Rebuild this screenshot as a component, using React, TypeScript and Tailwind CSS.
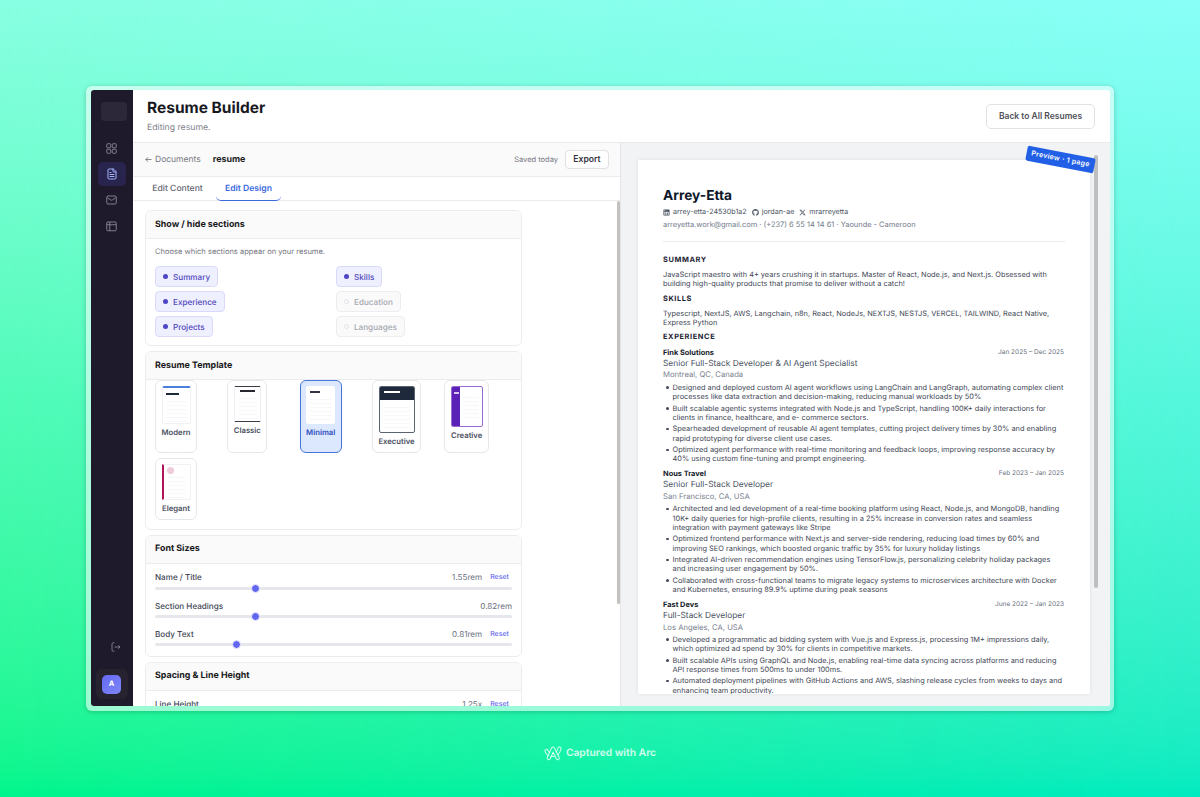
import React from 'react';
import { FileText } from 'lucide-react';
import { FaLinkedin, FaGithub } from 'react-icons/fa';
import { FaXTwitter } from 'react-icons/fa6';

const jobs = [
  {
    company: 'Fink Solutions',
    date: 'Jan 2025 – Dec 2025',
    role: 'Senior Full-Stack Developer & AI Agent Specialist',
    place: 'Montreal, QC, Canada',
    points: [
      'Designed and deployed custom AI agent workflows using LangChain and LangGraph, automating complex client\nprocesses like data extraction and decision-making, reducing manual workloads by 50%',
      'Built scalable agentic systems integrated with Node.js and TypeScript, handling 100K+ daily interactions for\nclients in finance, healthcare, and e- commerce sectors.',
      'Spearheaded development of reusable AI agent templates, cutting project delivery times by 30% and enabling\nrapid prototyping for diverse client use cases.',
      'Optimized agent performance with real-time monitoring and feedback loops, improving response accuracy by\n40% using custom fine-tuning and prompt engineering.',
    ],
  },
  {
    company: 'Nous Travel',
    date: 'Feb 2023 – Jan 2025',
    role: 'Senior Full-Stack Developer',
    place: 'San Francisco, CA, USA',
    points: [
      'Architected and led development of a real-time booking platform using React, Node.js, and MongoDB, handling\n10K+ daily queries for high-profile clients, resulting in a 25% increase in conversion rates and seamless\nintegration with payment gateways like Stripe',
      'Optimized frontend performance with Next.js and server-side rendering, reducing load times by 60% and\nimproving SEO rankings, which boosted organic traffic by 35% for luxury holiday listings',
      'Integrated AI-driven recommendation engines using TensorFlow.js, personalizing celebrity holiday packages\nand increasing user engagement by 50%.',
      'Collaborated with cross-functional teams to migrate legacy systems to microservices architecture with Docker\nand Kubernetes, ensuring 89.9% uptime during peak seasons',
    ],
  },
  {
    company: 'Fast Devs',
    date: 'June 2022 – Jan 2023',
    role: 'Full-Stack Developer',
    place: 'Los Angeles, CA, USA',
    points: [
      'Developed a programmatic ad bidding system with Vue.js and Express.js, processing 1M+ impressions daily,\nwhich optimized ad spend by 30% for clients in competitive markets.',
      'Built scalable APIs using GraphQL and Node.js, enabling real-time data syncing across platforms and reducing\nAPI response times from 500ms to under 100ms.',
      'Automated deployment pipelines with GitHub Actions and AWS, slashing release cycles from weeks to days and\nenhancing team productivity.',
    ],
  },
];

const sections = [
  { name: 'Summary', on: true },
  { name: 'Skills', on: true },
  { name: 'Experience', on: true },
  { name: 'Education', on: false },
  { name: 'Projects', on: true },
  { name: 'Languages', on: false },
];

function Sidebar() {
  return (
    <aside className="flex w-[42px] shrink-0 flex-col items-center bg-[#1e1a2b] text-[#8b8898]">
      <div className="mt-[12px] ml-[4px] h-[19px] w-[26px] rounded-[4px] bg-[#2c2839]" />
      <nav className="mt-[16px] mr-[1px] flex flex-col items-center">
        <div className="flex h-[23px] items-center">
          <svg className="h-[11px] w-[11px]" viewBox="0 0 22 22" fill="none" stroke="currentColor" strokeWidth="1.8">
            <rect x="1.500" y="1.500" width="8" height="8" rx="1.500" />
            <rect x="12.500" y="1.500" width="8" height="8" rx="1.500" />
            <rect x="1.500" y="12.500" width="8" height="8" rx="1.500" />
            <rect x="12.500" y="12.500" width="8" height="8" rx="1.500" />
          </svg>
        </div>
        <div className="mt-[2px] flex h-[24px] w-[28px] items-center justify-center rounded-[5px] bg-[#28244e] text-[#a5b4fc]">
          <FileText className="h-[12px] w-[12px]" strokeWidth={2} />
        </div>
        <div className="mt-[2px] flex h-[24px] items-center">
          <svg className="h-[10px] w-[11px]" viewBox="0 0 22 20" fill="none" stroke="currentColor" strokeWidth="1.8">
            <rect x="1.500" y="2" width="19" height="16" rx="2.500" />
            <path d="M2.500 5.500 9.500 10c1 .6 2 .6 3 0l7-4.500" />
          </svg>
        </div>
        <div className="mt-[2px] flex h-[24px] items-center">
          <svg className="h-[11px] w-[11px]" viewBox="0 0 22 22" fill="none" stroke="currentColor" strokeWidth="1.8">
            <rect x="1.500" y="2" width="19" height="17.500" rx="2" />
            <path d="M1.500 7.500h19M7.500 2v17.500" />
          </svg>
        </div>
      </nav>
      <svg className="mt-auto mb-[17px] ml-[8px] h-[10px] w-[10px]" viewBox="0 0 20 20" fill="none" stroke="currentColor" strokeWidth="1.7">
        <path d="M7 1.500H4.500a2.500 2.500 0 0 0-2.500 2.500v12a2.500 2.500 0 0 0 2.500 2.500H7M7 10h11M14.500 6.500 18 10l-3.500 3.500" />
      </svg>
      <div className="mb-[7px] flex h-[30px] w-[32px] items-center justify-center rounded-[6px] bg-[#26222f]">
        <div className="mr-[1px] flex h-[19px] w-[19px] items-center justify-center rounded-[5px] bg-linear-to-br from-[#6468f1] to-[#7f86f8] text-[7.500px] font-bold text-white">
          A
        </div>
      </div>
    </aside>
  );
}

function Card({ title, className, children }: { title: string; className: string; children: React.ReactNode }) {
  return (
    <section className={`shrink-0 overflow-hidden rounded-[6px] border border-[#ececef] bg-white ${className}`}>
      <h3 className="flex h-[28px] items-center border-b border-[#ececef] bg-[#fafafa] px-[9px] text-[8.900px] font-bold text-[#18181b]">
        {title}
      </h3>
      {children}
    </section>
  );
}

function Chip({ name, on }: { name: string; on: boolean }) {
  return (
    <div
      className={`flex h-[20.500px] w-fit items-center rounded-[4px] border pt-[1px] pr-[7px] pl-[7px] text-[8.150px] font-medium ${
        on ? 'border-[#d9dafa] bg-[#eef0ff] text-[#5046bb]' : 'border-[#ededf1] bg-[#fafafb] text-[#a5a7b0]'
      }`}
    >
      <span className={`mr-[5px] h-[5px] w-[5px] rounded-full ${on ? 'bg-[#4f46c5]' : 'border border-[#e1e3e8]'}`} />
      {name}
    </div>
  );
}

function Lines({ className }: { className: string }) {
  return (
    <div className={`flex flex-col gap-[3px] ${className}`}>
      {[0, 1, 2, 3, 4, 5].map((i) => (
        <div key={i} className="h-px bg-[#f6f7f9]" />
      ))}
    </div>
  );
}

function Template({ name, className, active, children }: { name: string; className: string; active?: boolean; children: React.ReactNode }) {
  return (
    <div>
      <div
        className={`flex w-fit flex-col items-center rounded-[6px] border-[1.500px] px-[5.500px] pt-[5px] text-[7.700px] font-semibold ${
          active ? 'border-[#4474dc] bg-[#dbe8fd] text-[#2f4fc0]' : 'border-[#e6e7eb] bg-white text-[#4b5060]'
        } ${className}`}
      >
        {children}
        <div className="mt-[3px] leading-[11px]">{name}</div>
      </div>
    </div>
  );
}

function Slider({ label, value, at, reset }: { label: string; value: string; at: number; reset?: boolean }) {
  return (
    <div className="h-[28.200px]">
      <div className="flex h-[12px] items-center text-[8.100px] font-medium text-[#424856]">
        <span>{label}</span>
        <span className="ml-auto font-normal text-[#6b7080]">{value}</span>
        {reset && <span className="mr-[3px] ml-[8px] text-[7px] text-[#6466ee]">Reset</span>}
      </div>
      <div className="relative mt-[3.500px] h-[3px] rounded-full bg-[#e5e7eb]">
        <div
          className="absolute top-[-3px] h-[9px] w-[9px] rounded-full border border-[#f0f1fe] bg-[#6265ee]"
          style={{ left: at }}
        />
      </div>
    </div>
  );
}

function DesignPanel() {
  return (
    <div className="flex w-[487px] shrink-0 flex-col bg-white">
      <div className="flex h-[34px] shrink-0 items-center border-b border-[#ebebee] bg-[#fafafa] pr-[11px] pl-[12px]">
        <svg className="mr-[3px] h-[7px] w-[7px]" viewBox="0 0 14 14" fill="none" stroke="#71717a" strokeWidth="1.700">
          <path d="M13 7H1.500M6 2.500 1.500 7 6 11.500" />
        </svg>
        <span className="pt-[1px] text-[8.500px] text-[#777782]">Documents</span>
        <span className="ml-[12px] pt-[1px] text-[8.900px] font-bold text-[#1c1c22]">resume</span>
        <span className="ml-auto text-[7.500px] text-[#777782]">Saved today</span>
        <button className="ml-[7px] h-[19px] w-[44px] rounded-[4px] border border-[#e0e0e5] bg-white text-[8.600px] font-semibold text-[#333340]">
          Export
        </button>
      </div>
      <div className="flex h-[24px] shrink-0 border-b border-[#ebebee] text-[8.600px] font-medium text-[#666672]">
        <div className="ml-[12px] w-[65px] text-center leading-[24px]">Edit Content</div>
        <div className="ml-[6px] h-[24px] w-[65px] rounded-b-[5px] border-b-[1.500px] border-[#3b6ae0] text-center leading-[24px] font-semibold text-[#3b6ae0]">
          Edit Design
        </div>
      </div>
      <div className="flex min-h-0 flex-1 justify-between overflow-hidden">
        <div className="ml-[12px] flex w-[377px] flex-col gap-[5px] pt-[9px]">
          <Card title="Show / hide sections" className="h-[136px]">
            <div className="px-[9px] pt-[7px]">
              <p className="text-[7.550px] leading-[12px] text-[#777782]">Choose which sections appear on your resume.</p>
              <div className="mt-[8px] grid grid-cols-[181px_1fr] gap-y-[4.600px]">
                {sections.map((s) => (
                  <Chip key={s.name} {...s} />
                ))}
              </div>
            </div>
          </Card>
          <Card title="Resume Template" className="h-[178.500px]">
            <div className="grid grid-cols-[repeat(5,72.300px)] gap-y-[5px] px-[9px]">
              <Template name="Modern" className="h-[73px]">
                <div className="h-[38px] w-[29px] rounded-[2px] border border-t-2 border-[#f0f1f4] border-t-[#4a80dc]">
                  <div className="mt-[5px] ml-[3px] h-[2px] w-[13px] bg-[#1e293b]" />
                  <Lines className="mx-[3px] mt-[6px]" />
                </div>
              </Template>
              <Template name="Classic" className="h-[73px]">
                <div className="h-[35.500px] w-[27px] rounded-[1.500px] border-x border-y-[1.500px] border-x-[#eeeff2] border-y-[#3b3b45]">
                  <div className="mx-auto mt-[3px] h-[2px] w-[15px] bg-[#27272f]" />
                  <Lines className="mx-[3px] mt-[6px]" />
                </div>
              </Template>
              <Template name="Minimal" active className="h-[73px]">
                <div className="h-[38px] w-[29px] rounded-[2px] bg-white pt-[5px]">
                  <div className="ml-[4px] h-[1.500px] w-[10px] bg-[#333344]" />
                  <Lines className="mx-[4px] mt-[6px]" />
                </div>
              </Template>
              <Template name="Executive" className="h-[73px]">
                <div className="h-[47px] w-[36px] overflow-hidden rounded-[2px] border border-[#5b6270]">
                  <div className="h-[13px] bg-[#1e293b] pt-[4px] pl-[4px]">
                    <div className="h-[2px] w-[16px] bg-white" />
                  </div>
                  <Lines className="mx-[4px] mt-[7px]" />
                </div>
              </Template>
              <Template name="Creative" className="h-[73px]">
                <div className="flex h-[40.500px] w-[32px] overflow-hidden rounded-[2px] border border-[#9b6bd4]">
                  <div className="w-[8px] bg-[#5b21b6] pt-[5px] pl-[2px]">
                    <div className="h-[1.500px] w-[5px] bg-[#d5c5f0]" />
                  </div>
                  <Lines className="mx-[3px] mt-[10px] flex-1" />
                </div>
              </Template>
              <Template name="Elegant" className="h-[62px]">
                <div className="h-[36px] w-[29px] rounded-[1px] border border-l-2 border-[#f1f1f4] border-l-[#b01555]">
                  <div className="mt-[2px] ml-[3px] h-[7px] w-[7px] rounded-full bg-[#edcbd9]" />
                  <Lines className="mx-[4px] mt-[3px]" />
                </div>
              </Template>
            </div>
          </Card>
          <Card title="Font Sizes" className="h-[122px]">
            <div className="px-[9px] pt-[8px]">
              <Slider label="Name / Title" value="1.55rem" at={96} reset />
              <Slider label="Section Headings" value="0.82rem" at={96} />
              <Slider label="Body Text" value="0.81rem" at={77} reset />
            </div>
          </Card>
          <Card title="Spacing & Line Height" className="h-[122px]">
            <div className="px-[9px] pt-[8px]">
              <Slider label="Line Height" value="1.25x" at={96} reset />
            </div>
          </Card>
        </div>
        <div className="h-[403px] w-[3px] rounded-full bg-[#c4c2bf]" />
      </div>
    </div>
  );
}

function Heading({ children }: { children: React.ReactNode }) {
  return <h4 className="text-[7.400px] leading-[10px] font-bold tracking-[0.6px] text-[#1c2433]">{children}</h4>;
}

function Resume() {
  return (
    <div className="h-[534px] w-[452px] overflow-hidden bg-white px-[25px] text-[7.380px] leading-[9.300px] text-[#3f4756] shadow-[0_0_4px_rgba(0,0,0,0.08)]">
      <h2 className="mt-[26px] text-[13.700px] leading-[20px] font-bold text-[#0f172a]">Arrey-Etta</h2>
      <div className="mt-[1px] flex h-[10px] items-center text-[7.150px] text-[#4b5563]">
        <FaLinkedin className="mr-[3px] h-[7px] w-[7px]" />
        <span>arrey-etta-24530b1a2</span>
        <FaGithub className="mr-[3px] ml-[5px] h-[7px] w-[7px]" />
        <span>jordan-ae</span>
        <FaXTwitter className="mr-[3px] ml-[5px] h-[7px] w-[7px]" />
        <span>mrarreyetta</span>
      </div>
      <p className="mt-[3px] h-[10px] text-[7.450px] text-[#737b8b]">
        arreyetta.work@gmail.com · (+237) 6 55 14 14 61 · Yaounde - Cameroon
      </p>
      <div className="mt-[11px] mb-[13px] h-px bg-[#e9ebef]" />
      <Heading>SUMMARY</Heading>
      <p className="mt-[5px] mb-[5px] whitespace-pre">
        {'JavaScript maestro with 4+ years crushing it in startups. Master of React, Node.js, and Next.js. Obsessed with\nbuilding high-quality products that promise to deliver without a catch!'}
      </p>
      <Heading>SKILLS</Heading>
      <p className="mt-[5px] mb-[5px] whitespace-pre">
        {'Typescript, NextJS, AWS, Langchain, n8n, React, NodeJs, NEXTJS, NESTJS, VERCEL, TAILWIND, React Native,\nExpress Python'}
      </p>
      <Heading>EXPERIENCE</Heading>
      <div className="mt-[4.300px] flex flex-col gap-[4.200px]">
        {jobs.map((job) => (
          <div key={job.company}>
            <div className="flex h-[11.500px] items-center justify-between">
              <span className="text-[7.400px] font-bold text-[#141a29]">{job.company}</span>
              <span className="mr-[1px] text-[6.500px] text-[#6b7280]">{job.date}</span>
            </div>
            <div className="h-[11.500px] text-[8.370px] leading-[12.500px] text-[#475060]">{job.role}</div>
            <div className="h-[11.500px] text-[7.700px] leading-[11.500px] text-[#7b8290]">{job.place}</div>
            <ul className="mt-[1.800px] flex flex-col gap-[2.200px]">
              {job.points.map((p) => (
                <li key={p} className="flex whitespace-pre">
                  <span className="mt-[3.500px] mr-[4px] ml-[3px] h-[2.500px] w-[2.500px] shrink-0 rounded-full bg-[#3f4756]" />
                  {p}
                </li>
              ))}
            </ul>
          </div>
        ))}
      </div>
    </div>
  );
}

function App() {
  return (
    <div className="relative h-[797px] w-[1200px] overflow-hidden bg-linear-to-b from-[#88ffe2] via-[#50fbb8] to-[#00f68c] font-['Inter',sans-serif] [text-rendering:geometricPrecision]">
      <div className="absolute inset-0 bg-linear-to-b from-[#88fff7] via-[#55f7dc] to-[#00ebc0] [mask-image:linear-gradient(to_right,transparent,black)]" />
      <div className="relative mt-[86px] ml-[86px] h-[625px] w-[1028px] rounded-[6px] bg-white/55 pt-[4px] pr-[4px] pb-[5px] pl-[5px] shadow-[0_1px_5px_rgba(0,60,40,0.25)]">
        <div className="flex h-full overflow-hidden rounded-[3px] bg-white">
          <Sidebar />
          <main className="flex min-w-0 flex-1 flex-col">
            <header className="flex h-[53px] shrink-0 items-center justify-between border-b border-[#e9e9ec] pr-[15px] pl-[14px]">
              <div>
                <h1 className="text-[15.500px] leading-[20px] font-bold text-[#18181f]">Resume Builder</h1>
                <p className="mt-[4px] text-[8.700px] leading-[13px] text-[#82828c]">Editing resume.</p>
              </div>
              <button className="h-[25px] w-[109px] rounded-[5px] border border-[#e1e1e6] text-[8.500px] font-semibold text-[#50505a]">
                Back to All Resumes
              </button>
            </header>
            <div className="flex min-h-0 flex-1">
              <DesignPanel />
              <div className="relative flex-1 border-l border-[#e4e4e8] bg-[#f2f3f4] pt-[17px] pl-[17px]">
                <Resume />
                <div className="absolute top-[12px] left-[473px] h-[433px] w-[4px] rounded-full bg-[#bfbfbf]" />
                <div className="absolute top-[9px] left-[405px] flex h-[15px] w-[69px] rotate-[11deg] items-center justify-center rounded-[2px] bg-[#2160e6] text-[7px] font-semibold tracking-[0.300px] text-white">
                  Preview · 1 page
                </div>
              </div>
            </div>
          </main>
        </div>
      </div>
      <footer className="relative mt-[33px] flex items-center justify-center text-[10.200px] leading-[16px] font-bold text-white/75">
        <svg className="mr-[4px] h-[16px] w-[18px]" viewBox="0 0 36 32" fill="none" strokeLinecap="round" strokeLinejoin="round">
          <mask id="arc-legs" maskUnits="userSpaceOnUse" x="0" y="0" width="36" height="32">
            <path d="M9.500 26 18 7.500 27.500 26" stroke="white" strokeWidth="8.500" />
            <path d="M9.500 26 18 7.500 27.500 26" stroke="black" strokeWidth="4.200" />
          </mask>
          <mask id="arc-wave" maskUnits="userSpaceOnUse" x="0" y="0" width="36" height="32">
            <path d="M5 12c4 10 22 12 26-5" stroke="white" strokeWidth="8.500" />
            <path d="M5 12c4 10 22 12 26-5M9.500 26 18 7.500 27.500 26" stroke="black" strokeWidth="4.200" />
          </mask>
          <rect width="36" height="32" fill="currentColor" mask="url(#arc-legs)" />
          <rect width="36" height="32" fill="currentColor" mask="url(#arc-wave)" />
        </svg>
        <span className="pt-[1px]">Captured with Arc</span>
      </footer>
    </div>
  );
}

export default App;
